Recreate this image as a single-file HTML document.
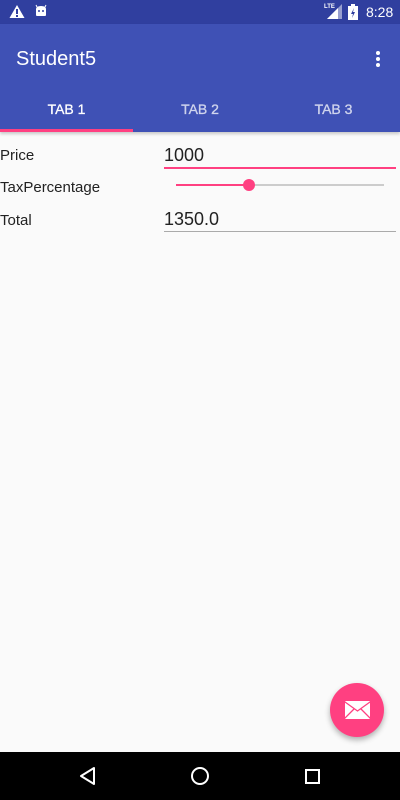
<!DOCTYPE html>
<html><head><style>
*{margin:0;padding:0;box-sizing:border-box}
body{width:400px;height:800px;background:#fafafa;font-family:"Liberation Sans",sans-serif;position:relative;overflow:hidden}
.abs{position:absolute}
</style></head><body>
<div class="abs" style="left:0;top:0;width:400px;height:24px;background:#303f9f"></div>
<div class="abs" style="left:0;top:24px;width:400px;height:108px;background:#3f51b5;box-shadow:0 2px 3px rgba(0,0,0,.2)"></div>
<svg class="abs" style="left:9px;top:4px" width="16" height="15" viewBox="0 0 16 15"><path d="M8 1L15.5 14H.5Z" fill="#fff"/><rect x="7" y="5" width="2" height="5" fill="#303f9f"/><rect x="7" y="11" width="2" height="2" fill="#303f9f"/></svg>
<svg class="abs" style="left:34px;top:4px" width="14" height="14" viewBox="0 0 14 14"><path d="M2 5Q2 2 7 2Q12 2 12 5V11Q12 12 11 12H3Q2 12 2 11Z" fill="#fff"/><path d="M3 3L2 1M11 3L12 1" stroke="#fff"/><circle cx="5" cy="7" r="1" fill="#303f9f"/><circle cx="9" cy="7" r="1" fill="#303f9f"/></svg>
<div class="abs" style="left:324px;top:4px;font-size:6px;color:#fff;font-weight:bold">LTE</div>
<svg class="abs" style="left:327px;top:4px" width="15" height="15"><path d="M15 0V15H0Z" fill="#fff" opacity=".5"/><path d="M11 4V15H0Z" fill="#fff"/></svg>
<svg class="abs" style="left:348px;top:4px" width="10" height="16"><rect x="3" y="0" width="4" height="2" fill="#fff"/><rect x="0" y="2" width="10" height="14" fill="#fff"/><path d="M6 4L3 10H5L4 14L7 8H5Z" fill="#303f9f"/></svg>
<div class="abs" style="left:366px;top:4px;font-size:14px;color:#fff">8:28</div>
<div class="abs" style="left:16px;top:48px;font-size:20px;color:#fff">Student5</div>
<div class="abs" style="left:376px;top:51px;width:4px;height:4px;border-radius:2px;background:#fff;box-shadow:0 6px 0 #fff,0 12px 0 #fff"></div>
<div class="abs" style="left:0;top:101px;width:133px;text-align:center;font-size:14px;color:#fff;-webkit-text-stroke:.3px #fff">TAB 1</div>
<div class="abs" style="left:133px;top:101px;width:134px;text-align:center;font-size:14px;color:rgba(255,255,255,.7);-webkit-text-stroke:.3px rgba(255,255,255,.7)">TAB 2</div>
<div class="abs" style="left:267px;top:101px;width:133px;text-align:center;font-size:14px;color:rgba(255,255,255,.7);-webkit-text-stroke:.3px rgba(255,255,255,.7)">TAB 3</div>
<div class="abs" style="left:0;top:129px;width:133px;height:3px;background:#ff4081"></div>
<div class="abs" style="left:0;top:147px;font-size:15px;color:#222">Price</div>
<div class="abs" style="left:164px;top:145px;font-size:18px;color:#222">1000</div>
<div class="abs" style="left:164px;top:167px;width:232px;height:2px;background:#ff4081"></div>
<div class="abs" style="left:0;top:179px;font-size:15px;color:#222">TaxPercentage</div>
<div class="abs" style="left:176px;top:184px;width:208px;height:2px;background:#ccc"></div>
<div class="abs" style="left:176px;top:184px;width:73px;height:2px;background:#ff4081"></div>
<div class="abs" style="left:243px;top:179px;width:12px;height:12px;border-radius:6px;background:#ff4081"></div>
<div class="abs" style="left:0;top:212px;font-size:15px;color:#222">Total</div>
<div class="abs" style="left:164px;top:209px;font-size:18px;color:#222">1350.0</div>
<div class="abs" style="left:164px;top:231px;width:232px;height:1px;background:#aaa"></div>
<div class="abs" style="left:330px;top:683px;width:54px;height:54px;border-radius:27px;background:#ff4081;box-shadow:0 3px 6px rgba(0,0,0,.3)"></div>
<svg class="abs" style="left:345px;top:701px" width="25" height="18"><rect width="25" height="18" rx="1" fill="#fff"/><path d="M0 1L12.5 10L25 1M0 17L9 8M25 17L16 8" stroke="#ff4081" stroke-width="1.3" fill="none"/></svg>
<div class="abs" style="left:0;top:752px;width:400px;height:48px;background:#000"></div>
<svg class="abs" style="left:0;top:752px" width="400" height="48"><path d="M94 16V32L81 24Z" fill="none" stroke="#fff" stroke-width="2" stroke-linejoin="round"/><circle cx="200" cy="24" r="8" fill="none" stroke="#fff" stroke-width="2"/><rect x="306" y="18" width="13" height="13" fill="none" stroke="#fff" stroke-width="2"/></svg>
</body></html>
